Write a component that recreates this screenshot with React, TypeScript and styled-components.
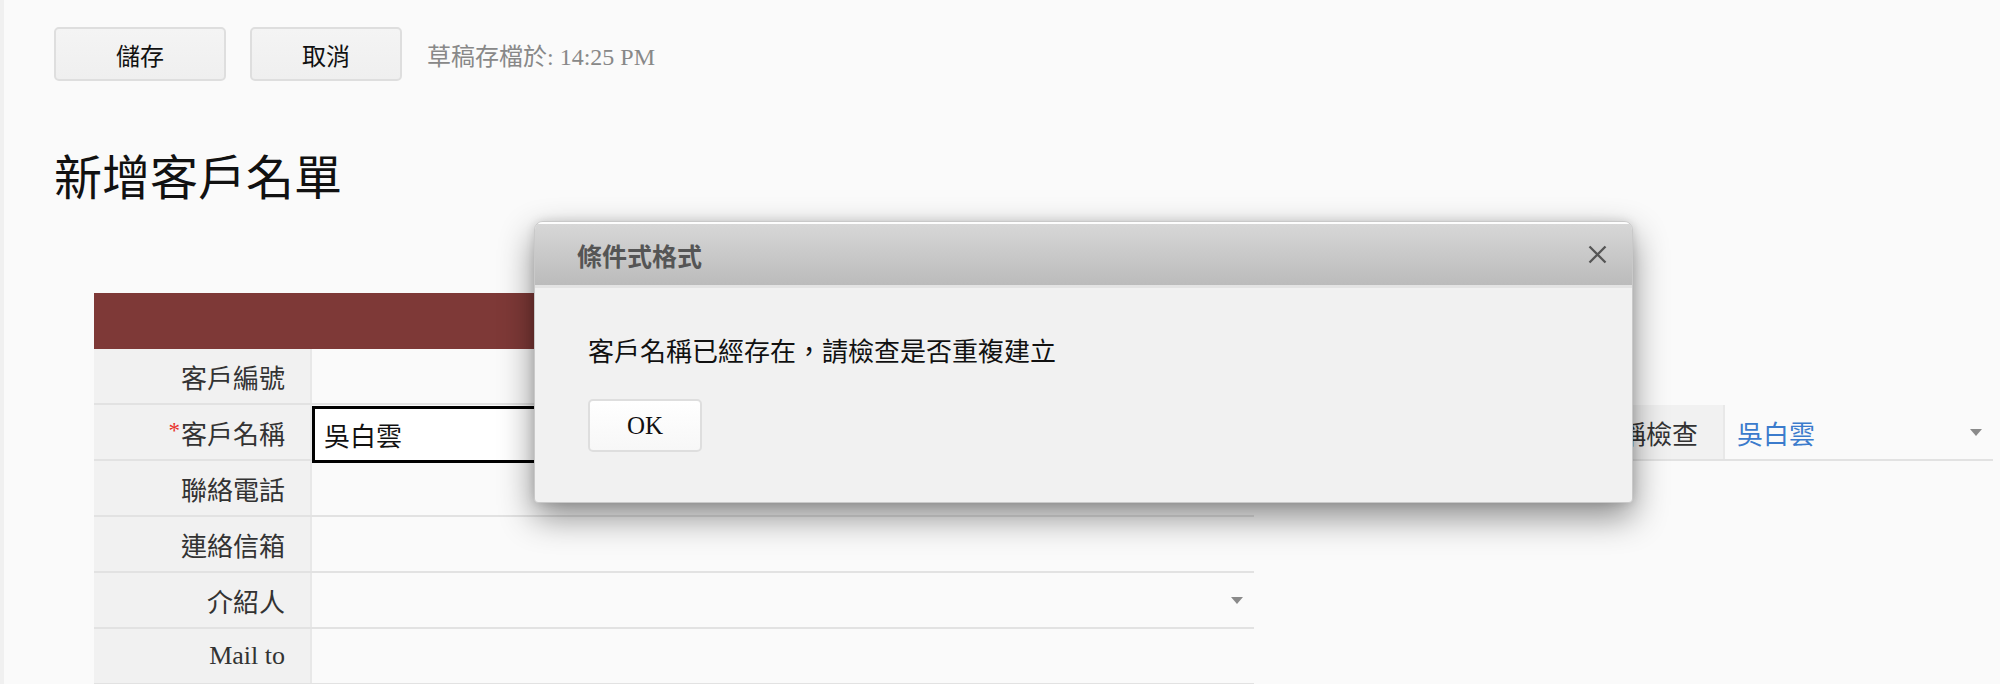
import React from "react";
import styled, { createGlobalStyle } from "styled-components";

const GlobalStyle = createGlobalStyle`
  html, body {
    margin: 0;
    padding: 0;
    background: #fafafa;
  }
  body {
    font-family: "Liberation Serif", "Noto Sans CJK TC", serif;
    color: #111;
  }
  * { box-sizing: border-box; }
`;

const Page = styled.div`
  position: relative;
  min-height: 684px;
  width: 2000px;
  overflow: hidden;
  border-left: 4px solid #f0f0f0;
  padding: 27px 0 0 50px;
`;

const Toolbar = styled.div`
  display: flex;
  align-items: center;
  gap: 24px;
  height: 54px;
`;

const ToolButton = styled.button<{ $w: number }>`
  width: ${(p) => p.$w}px;
  height: 54px;
  border: 2px solid #dedede;
  border-radius: 5px;
  background: linear-gradient(#f4f4f4, #efefef);
  font-family: "Liberation Serif", "Noto Sans CJK TC", serif;
  font-size: 24px;
  color: #111;
  padding: 0;
  cursor: pointer;
`;

const DraftNote = styled.span`
  font-size: 24px;
  color: #888;
  margin-left: 1px;
`;

const Title = styled.h1`
  margin: 63px 0 0 0;
  height: 60px;
  line-height: 60px;
  font-size: 48px;
  font-weight: 400;
  color: #111;
  font-family: "Noto Sans CJK TC", sans-serif;
`;

const FormArea = styled.div`
  display: flex;
  align-items: flex-start;
  margin: 89px 0 0 40px;
`;

const LeftTable = styled.div`
  width: 1160px;
  display: flex;
  flex-direction: column;
`;

const RightTable = styled.div`
  width: 486px;
  margin-left: 253px;
  margin-top: 112px;
  display: flex;
  flex-direction: column;
`;

const SectionBar = styled.div`
  height: 56px;
  background: #7e3937;
`;

const Row = styled.div`
  display: grid;
  grid-template-columns: 218px 1fr;
  grid-template-rows: 54px;
  height: 56px;
  border-bottom: 2px solid #e2e2e2;
`;

const Label = styled.div`
  background: #f1f1f1;
  border-right: 2px solid #e8e8e8;
  display: flex;
  align-items: center;
  justify-content: flex-end;
  padding-right: 25px;
  font-size: 26px;
  color: #333;
  white-space: nowrap;
  overflow: hidden;
`;

const Required = styled.span`
  color: #e8322b;
  font-size: 23px;
  margin-right: 1px;
  align-self: flex-start;
  margin-top: 13px;
`;

const Value = styled.div`
  position: relative;
  display: flex;
  align-items: center;
  padding: 0 11px 0 12px;
  font-size: 26px;
  min-height: 0;
`;

const TextInput = styled.div`
  align-self: flex-start;
  flex: none;
  margin: 1px 0 0 -12px;
  width: calc(100% + 23px);
  height: 57px;
  border: 3px solid #000;
  background: #fff;
  display: flex;
  align-items: center;
  padding-left: 9px;
  font-size: 26px;
  color: #111;
`;

const LinkValue = styled.span`
  color: #3b7bcc;
  font-size: 26px;
  flex: 1;
`;

const Caret = styled.span`
  margin-left: auto;
  width: 0;
  height: 0;
  border-left: 6px solid transparent;
  border-right: 6px solid transparent;
  border-top: 7px solid #8a8a8a;
`;

const Dialog = styled.div`
  position: absolute;
  left: 530px;
  top: 221px;
  width: 1099px;
  height: 282px;
  border: 1px solid #c9c9c9;
  border-radius: 9px 9px 4px 4px;
  background: #f1f1f1;
  box-shadow: 0 14px 34px rgba(0, 0, 0, 0.45), 0 0 10px rgba(0, 0, 0, 0.12);
  display: flex;
  flex-direction: column;
  overflow: hidden;
`;

const DialogHeader = styled.div`
  height: 66px;
  flex: none;
  display: flex;
  align-items: center;
  justify-content: space-between;
  padding: 0 24px 0 42px;
  background: linear-gradient(#d7d7d7, #bbbbbb);
  border-top: 2px solid #fdfdfd;
  border-bottom: 3px solid #e3e3e3;
`;

const DialogTitle = styled.span`
  font-family: "Noto Sans CJK TC", sans-serif;
  font-weight: 700;
  font-size: 25px;
  color: #555;
`;

const CloseButton = styled.button`
  width: 22px;
  height: 22px;
  padding: 0;
  border: 0;
  background: transparent;
  display: flex;
  align-items: center;
  justify-content: center;
  cursor: pointer;
`;

const DialogBody = styled.div`
  flex: 1;
  padding: 47px 0 0 53px;
  display: flex;
  flex-direction: column;
  align-items: flex-start;
  gap: 28px;
`;

const Message = styled.p`
  margin: 0;
  height: 36px;
  line-height: 36px;
  font-size: 26px;
  color: #111;
`;

const OkButton = styled.button`
  width: 114px;
  height: 53px;
  border: 2px solid #dedede;
  border-radius: 5px;
  background: linear-gradient(#ffffff, #f7f7f7);
  font-family: "Liberation Serif", "Noto Sans CJK TC", serif;
  font-size: 25px;
  color: #111;
  padding: 0;
  cursor: pointer;
`;

export default function App() {
  return (
    <>
      <GlobalStyle />
      <Page>
        <Toolbar>
          <ToolButton $w={172}>儲存</ToolButton>
          <ToolButton $w={152}>取消</ToolButton>
          <DraftNote>草稿存檔於: 14:25 PM</DraftNote>
        </Toolbar>
        <Title>新增客戶名單</Title>
        <FormArea>
          <LeftTable>
            <SectionBar />
            <Row>
              <Label>客戶編號</Label>
              <Value />
            </Row>
            <Row>
              <Label>
                <Required>*</Required>客戶名稱
              </Label>
              <Value>
                <TextInput>吳白雲</TextInput>
              </Value>
            </Row>
            <Row>
              <Label>聯絡電話</Label>
              <Value />
            </Row>
            <Row>
              <Label>連絡信箱</Label>
              <Value />
            </Row>
            <Row>
              <Label>介紹人</Label>
              <Value>
                <Caret />
              </Value>
            </Row>
            <Row>
              <Label>Mail to</Label>
              <Value />
            </Row>
          </LeftTable>
          <RightTable>
            <Row>
              <Label>客戶名稱檢查</Label>
              <Value>
                <LinkValue>吳白雲</LinkValue>
                <Caret />
              </Value>
            </Row>
          </RightTable>
        </FormArea>
        <Dialog>
          <DialogHeader>
            <DialogTitle>條件式格式</DialogTitle>
            <CloseButton aria-label="close">
              <svg width="19" height="19" viewBox="0 0 19 19">
                <path d="M1.5 1.5 L17.5 17.5 M17.5 1.5 L1.5 17.5" stroke="#555" strokeWidth="2.3" strokeLinecap="butt" />
              </svg>
            </CloseButton>
          </DialogHeader>
          <DialogBody>
            <Message>客戶名稱已經存在，請檢查是否重複建立</Message>
            <OkButton>OK</OkButton>
          </DialogBody>
        </Dialog>
      </Page>
    </>
  );
}
